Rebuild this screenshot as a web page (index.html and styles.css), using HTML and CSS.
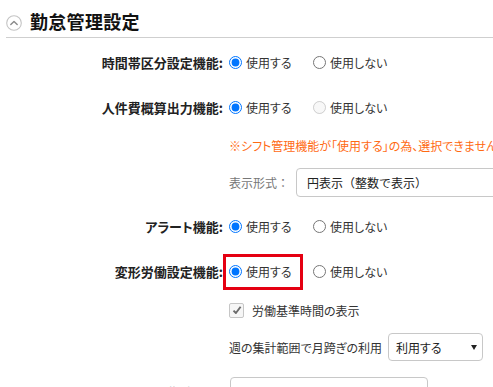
FILE: index.html
```html
<!DOCTYPE html>
<html lang="ja">
<head>
<meta charset="utf-8">
<title>勤怠管理設定</title>
<link rel="stylesheet" href="styles.css">
</head>
<body>
<div class="panel">
  <div class="header">
    <span class="toggle">
      <svg width="16" height="16" viewBox="0 0 16 16" aria-hidden="true">
        <circle cx="8" cy="8" r="7.3" fill="#fff" stroke="#c4c4c4" stroke-width="1.1"/>
        <polyline points="4.8,9.6 8,6.4 11.2,9.6" fill="none" stroke="#8a8a8a" stroke-width="1.4" stroke-linecap="round" stroke-linejoin="round"/>
      </svg>
    </span>
    <h2 class="title">勤怠管理設定</h2>
  </div>

  <div class="form">
    <div class="row">
      <div class="label">時間帯区分設定機能:</div>
      <div class="field">
        <label class="opt"><input type="radio" name="r1" checked>使用する</label>
        <label class="opt"><input type="radio" name="r1">使用しない</label>
      </div>
    </div>

    <div class="row">
      <div class="label">人件費概算出力機能:</div>
      <div class="field">
        <label class="opt"><input type="radio" name="r2" checked>使用する</label>
        <label class="opt"><input type="radio" name="r2" disabled>使用しない</label>
      </div>
    </div>

    <div class="row row-note">
      <div class="label"></div>
      <div class="field"><span class="warning">※シフト管理機能が「使用する」の為、選択できません。</span></div>
    </div>

    <div class="row row-format">
      <div class="label"></div>
      <div class="field">
        <span class="sublabel">表示形式：</span>
        <span class="textbox">円表示（整数で表示）</span>
      </div>
    </div>

    <div class="row">
      <div class="label">アラート機能:</div>
      <div class="field">
        <label class="opt"><input type="radio" name="r3" checked>使用する</label>
        <label class="opt"><input type="radio" name="r3">使用しない</label>
      </div>
    </div>

    <div class="row">
      <div class="label">変形労働設定機能:</div>
      <div class="field">
        <label class="opt marked"><input type="radio" name="r4" checked>使用する</label>
        <label class="opt"><input type="radio" name="r4">使用しない</label>
      </div>
    </div>

    <div class="row row-check">
      <div class="label"></div>
      <div class="field">
        <span class="check">
          <svg width="10" height="10" viewBox="0 0 10 10" aria-hidden="true">
            <polyline points="1.5,5.6 3.9,8 8.6,1.8" fill="none" stroke="#6b6b6b" stroke-width="1.9" stroke-linejoin="round"/>
          </svg>
        </span>
        <span class="checktext">労働基準時間の表示</span>
      </div>
    </div>

    <div class="row row-select">
      <div class="label"></div>
      <div class="field">
        <span class="plain">週の集計範囲で月跨ぎの利用</span>
        <span class="select"><span>利用する</span><span class="caret"></span></span>
      </div>
    </div>

    <div class="row row-last">
      <div class="label">勤務時間集計機能:</div>
      <div class="field"><span class="textbox short"></span></div>
    </div>
  </div>
</div>
</body>
</html>
```

FILE: styles.css
```css
html, body {
  margin: 0;
  padding: 0;
  overflow: hidden;
  background: #fff;
}

body {
  width: 493px;
  height: 387px;
  font-family: "Noto Sans CJK JP", "Noto Sans", sans-serif;
  font-feature-settings: "palt";
  font-size: 12px;
  color: #333;
}

.panel {
  width: 493px;
}

.header {
  display: flex;
  align-items: center;
  margin-left: 6px;
  height: 37px;
  border-bottom: 1px solid #cfcfcf;
  box-sizing: content-box;
}

.toggle {
  display: flex;
  width: 16px;
  height: 16px;
  margin-top: 9px;
}

.title {
  margin: 5px 0 0 8px;
  font-size: 18px;
  font-weight: bold;
  line-height: 20px;
  color: #111;
  letter-spacing: 0.3px;
}

.form {
  padding-top: 2px;
}

.row {
  display: grid;
  grid-template-columns: 223px 1fr;
  column-gap: 6px;
  align-items: center;
  height: 45px;
}

.row-note { height: 31px; }
.row-format { height: 43px; }
.row-check { height: 32px; }
.row-select { height: 42px; }
.row-last {
  height: auto;
  align-items: start;
  padding-top: 9px;
}
.row-last .label { padding-top: 6px; }

.label {
  text-align: right;
  font-size: 13px;
  font-weight: bold;
  color: #222;
  white-space: nowrap;
}

.field {
  display: flex;
  align-items: center;
  white-space: nowrap;
}

.opt {
  position: relative;
  display: inline-flex;
  align-items: center;
  gap: 4px;
  width: 84px;
  height: 18px;
  color: #333;
}

.opt input {
  margin: 0;
  width: 13px;
  height: 13px;
}

.marked::after {
  content: "";
  position: absolute;
  left: -6px;
  top: 50%;
  width: 80px;
  height: 36px;
  margin-top: -18px;
  box-sizing: border-box;
  border: 3px solid #e50012;
  pointer-events: none;
}

.warning {
  color: #ff6a13;
}

.sublabel {
  color: #777;
  width: 67px;
  font-feature-settings: normal;
}

.textbox {
  display: flex;
  align-items: center;
  box-sizing: border-box;
  width: 260px;
  height: 29px;
  padding-left: 10px;
  border: 1px solid #c8c8c8;
  border-radius: 4px;
  color: #222;
  flex-shrink: 0;
  font-feature-settings: normal;
}

.textbox.short {
  width: 198px;
  height: 28px;
  margin-left: 1px;
}

.check {
  display: flex;
  align-items: center;
  justify-content: center;
  box-sizing: border-box;
  width: 15px;
  height: 15px;
  border: 1px solid #c6c6c6;
  border-radius: 2px;
  background: #f6f6f6;
}

.checktext {
  margin-left: 8px;
  color: #333;
}

.plain {
  color: #333;
}

.select {
  display: flex;
  align-items: center;
  justify-content: space-between;
  box-sizing: border-box;
  width: 95px;
  height: 28px;
  margin-left: 6px;
  padding: 0 5px 0 7px;
  border: 1px solid #c8c8c8;
  border-radius: 4px;
  color: #222;
}

.caret {
  width: 0;
  height: 0;
  border-left: 3.5px solid transparent;
  border-right: 3.5px solid transparent;
  border-top: 5px solid #222;
}
```
